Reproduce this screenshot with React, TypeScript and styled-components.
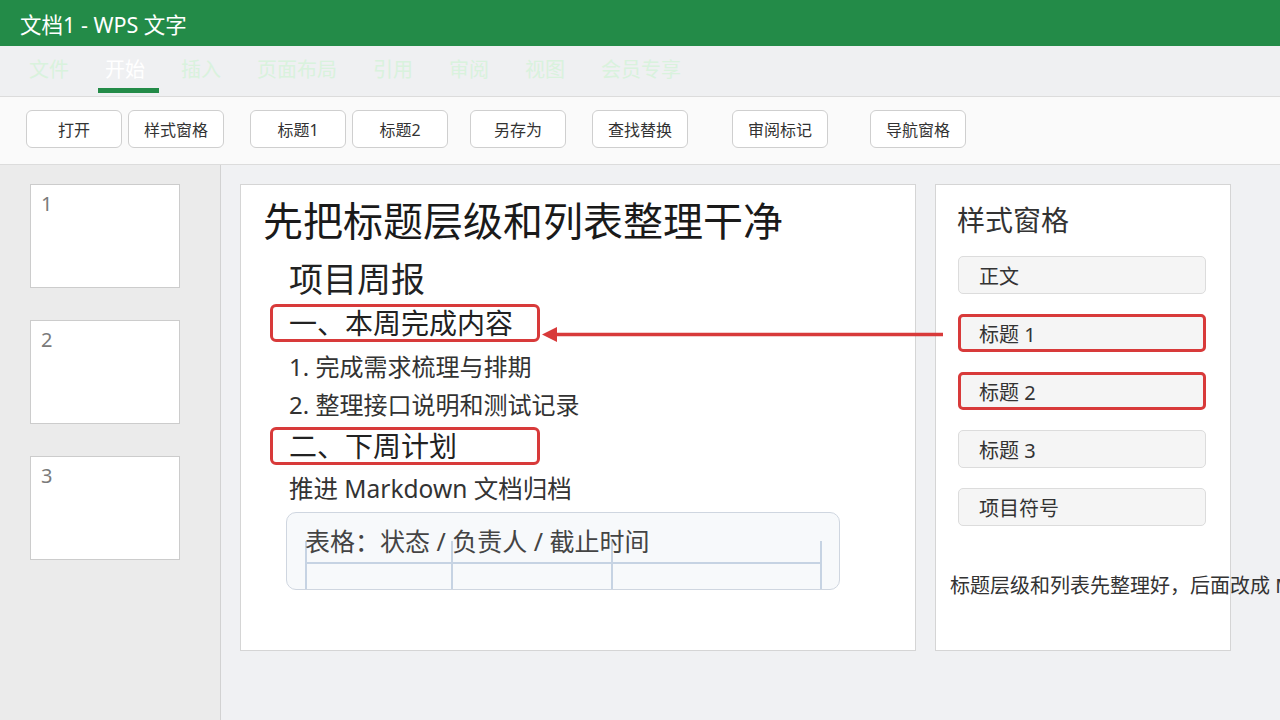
import React from "react";
import styled, { createGlobalStyle } from "styled-components";

const GlobalStyle = createGlobalStyle`
  html, body { margin: 0; padding: 0; overflow: hidden; }
  body {
    font-family: "Noto Sans", "Noto Sans CJK SC", sans-serif;
    background: #f0f1f3;
    color: #333;
  }
  * { box-sizing: border-box; }
`;

const Shell = styled.div`
  position: relative;
  width: 1280px;
  height: 720px;
  display: flex;
  flex-direction: column;
  overflow: hidden;
`;

const TitleBar = styled.header`
  flex: none;
  height: 46px;
  background: #238b48;
  color: #fff;
  font-size: 21.5px;
  display: flex;
  align-items: center;
  padding-left: 20px;
`;

const TabBar = styled.nav`
  flex: none;
  height: 51px;
  background: #eff0f2;
  border-bottom: 1px solid #dcdcdc;
  display: flex;
  gap: 15px;
  padding: 10px 0 0 22px;
`;

const Tab = styled.div<{ $active?: boolean }>`
  display: flex;
  flex-direction: column;
  font-size: 20px;
  line-height: 28px;
  color: ${(p) => (p.$active ? "#ffffff" : "#d9f2dd")};

  & > span {
    padding: 0 14px 0 7px;
  }

  &::after {
    content: "";
    height: 5px;
    margin-top: 4px;
    background: ${(p) => (p.$active ? "#238b48" : "transparent")};
  }
`;

const Toolbar = styled.div`
  flex: none;
  height: 68px;
  background: #fafafa;
  border-bottom: 1px solid #dcdcdc;
  display: flex;
  align-items: flex-start;
  padding: 13px 0 0 26px;
`;

const ToolButton = styled.button<{ $gap: number }>`
  width: 96px;
  height: 38px;
  margin-left: ${(p) => p.$gap}px;
  padding: 0;
  background: #fff;
  border: 1px solid #cfcfcf;
  border-radius: 6px;
  font-family: inherit;
  font-size: 16px;
  color: #333;
`;

const Workspace = styled.div`
  flex: 1;
  display: flex;
  min-height: 0;
`;

const PageRail = styled.aside`
  flex: none;
  width: 221px;
  background: #ebebeb;
  border-right: 1px solid #d2d2d2;
  display: flex;
  flex-direction: column;
  gap: 32px;
  padding: 19px 0 0 30px;
`;

const PageThumb = styled.div`
  width: 150px;
  height: 104px;
  background: #fff;
  border: 1px solid #cccccc;
  padding: 5px 10px;
  font-size: 20px;
  line-height: 28px;
  color: #7a7a7a;
`;

const Canvas = styled.main`
  flex: 1;
  display: flex;
  align-items: flex-start;
  gap: 19px;
  padding: 19px 0 0 19px;
`;

const DocPage = styled.section`
  flex: none;
  width: 676px;
  height: 467px;
  background: #fff;
  border: 1px solid #d5d5d5;
  padding: 10px 22px 0;
  display: flex;
  flex-direction: column;
  align-items: flex-start;
`;

const DocTitle = styled.h1`
  margin: 0;
  font-size: 40px;
  line-height: 52px;
  font-weight: 400;
  color: #1a1a1a;
  white-space: nowrap;
`;

const ReportTitle = styled.h2`
  margin: 10px 0 0 26px;
  font-size: 34px;
  line-height: 44px;
  font-weight: 400;
  color: #222;
`;

const SectionHeading = styled.h3<{ $top: number; $marked?: boolean }>`
  margin: ${(p) => p.$top}px 0 0 7px;
  width: 270px;
  height: 38px;
  border: 3px solid ${(p) => (p.$marked ? "#d83a3a" : "transparent")};
  border-radius: 6px;
  padding-left: 16px;
  font-size: 28px;
  line-height: 32px;
  font-weight: 400;
  color: #222;
  white-space: nowrap;
`;

const ListItem = styled.p<{ $top: number }>`
  margin: ${(p) => p.$top}px 0 0 26px;
  font-size: 24px;
  line-height: 32px;
  color: #333;
  white-space: nowrap;
`;

const Paragraph = styled.p`
  margin: 7px 0 0 26px;
  font-size: 24.5px;
  line-height: 34px;
  color: #333;
  white-space: nowrap;
`;

const TableCard = styled.div`
  margin: 6px 0 0 23px;
  width: 554px;
  height: 78px;
  background: #f7f9fb;
  border: 1px solid #cfd6e0;
  border-radius: 10px;
  overflow: hidden;
  padding: 11px 0 0 18px;
`;

const TableCaption = styled.div`
  position: relative;
  z-index: 1;
  font-size: 25px;
  line-height: 34px;
  color: #444;
  white-space: nowrap;
`;

const TableGrid = styled.div`
  margin-top: -17px;
  display: grid;
  grid-template-columns: 146px 160px 211px;
  grid-template-rows: 23px 40px;
`;

const TableCell = styled.div<{ $head?: boolean; $last?: boolean }>`
  border-left: 2px solid #c6d3e3;
  border-right: ${(p) => (p.$last ? "2px solid #c6d3e3" : "none")};
  border-bottom: ${(p) => (p.$head ? "2px solid #c6d3e3" : "none")};
`;

const StylePanel = styled.aside`
  flex: none;
  width: 296px;
  height: 467px;
  background: #fff;
  border: 1px solid #d5d5d5;
  padding: 15px 0 0 21px;
`;

const PanelTitle = styled.h2`
  margin: 0;
  font-size: 28px;
  line-height: 40px;
  font-weight: 400;
  color: #333;
`;

const StyleList = styled.div`
  margin-top: 16px;
  display: flex;
  flex-direction: column;
  gap: 20px;
`;

const StyleItem = styled.div<{ $marked?: boolean }>`
  width: 248px;
  height: 38px;
  margin-left: 1px;
  background: #f5f5f5;
  border: ${(p) => (p.$marked ? "3px solid #d83a3a" : "1px solid #dcdcdc")};
  border-radius: 5px;
  padding-left: ${(p) => (p.$marked ? 18 : 20)}px;
  display: flex;
  align-items: center;
  font-size: 20px;
  color: #333;
`;

const PanelNote = styled.p`
  margin: 46px 0 0 -7px;
  font-size: 20px;
  line-height: 28px;
  color: #333;
  white-space: nowrap;
`;

const Pointer = styled.svg`
  position: absolute;
  left: 540px;
  top: 325px;
  width: 406px;
  height: 20px;
  pointer-events: none;
`;

const tabs = ["文件", "开始", "插入", "页面布局", "引用", "审阅", "视图", "会员专享"];

const tools: { label: string; gap: number }[] = [
  { label: "打开", gap: 0 },
  { label: "样式窗格", gap: 6 },
  { label: "标题1", gap: 26 },
  { label: "标题2", gap: 6 },
  { label: "另存为", gap: 22 },
  { label: "查找替换", gap: 26 },
  { label: "审阅标记", gap: 44 },
  { label: "导航窗格", gap: 42 },
];

const styles: { name: string; marked?: boolean }[] = [
  { name: "正文" },
  { name: "标题 1", marked: true },
  { name: "标题 2", marked: true },
  { name: "标题 3" },
  { name: "项目符号" },
];

export default function App() {
  return (
    <Shell>
      <GlobalStyle />
      <TitleBar>文档1 - WPS 文字</TitleBar>
      <TabBar>
        {tabs.map((t) => (
          <Tab key={t} $active={t === "开始"}>
            <span>{t}</span>
          </Tab>
        ))}
      </TabBar>
      <Toolbar>
        {tools.map((b) => (
          <ToolButton key={b.label} $gap={b.gap}>
            {b.label}
          </ToolButton>
        ))}
      </Toolbar>
      <Workspace>
        <PageRail>
          {[1, 2, 3].map((n) => (
            <PageThumb key={n}>{n}</PageThumb>
          ))}
        </PageRail>
        <Canvas>
          <DocPage>
            <DocTitle>先把标题层级和列表整理干净</DocTitle>
            <ReportTitle>项目周报</ReportTitle>
            <SectionHeading $top={3} $marked>
              一、本周完成内容
            </SectionHeading>
            <ListItem $top={9}>1. 完成需求梳理与排期</ListItem>
            <ListItem $top={6}>2. 整理接口说明和测试记录</ListItem>
            <SectionHeading $top={6} $marked>
              二、下周计划
            </SectionHeading>
            <Paragraph>推进 Markdown 文档归档</Paragraph>
            <TableCard>
              <TableCaption>表格：状态 / 负责人 / 截止时间</TableCaption>
              <TableGrid>
                <TableCell $head />
                <TableCell $head />
                <TableCell $head $last />
                <TableCell />
                <TableCell />
                <TableCell $last />
              </TableGrid>
            </TableCard>
          </DocPage>
          <StylePanel>
            <PanelTitle>样式窗格</PanelTitle>
            <StyleList>
              {styles.map((s) => (
                <StyleItem key={s.name} $marked={s.marked}>
                  {s.name}
                </StyleItem>
              ))}
            </StyleList>
            <PanelNote>标题层级和列表先整理好，后面改成 Markdown 更省事。</PanelNote>
          </StylePanel>
        </Canvas>
      </Workspace>
      {/* connector from the heading style to the marked heading */}
      <Pointer viewBox="0 0 406 20">
        <line x1="15" y1="9.5" x2="403" y2="9.5" stroke="#d83a3a" strokeWidth="3.5" />
        <polygon points="2,9.5 17,2 17,17" fill="#d83a3a" />
      </Pointer>
    </Shell>
  );
}
